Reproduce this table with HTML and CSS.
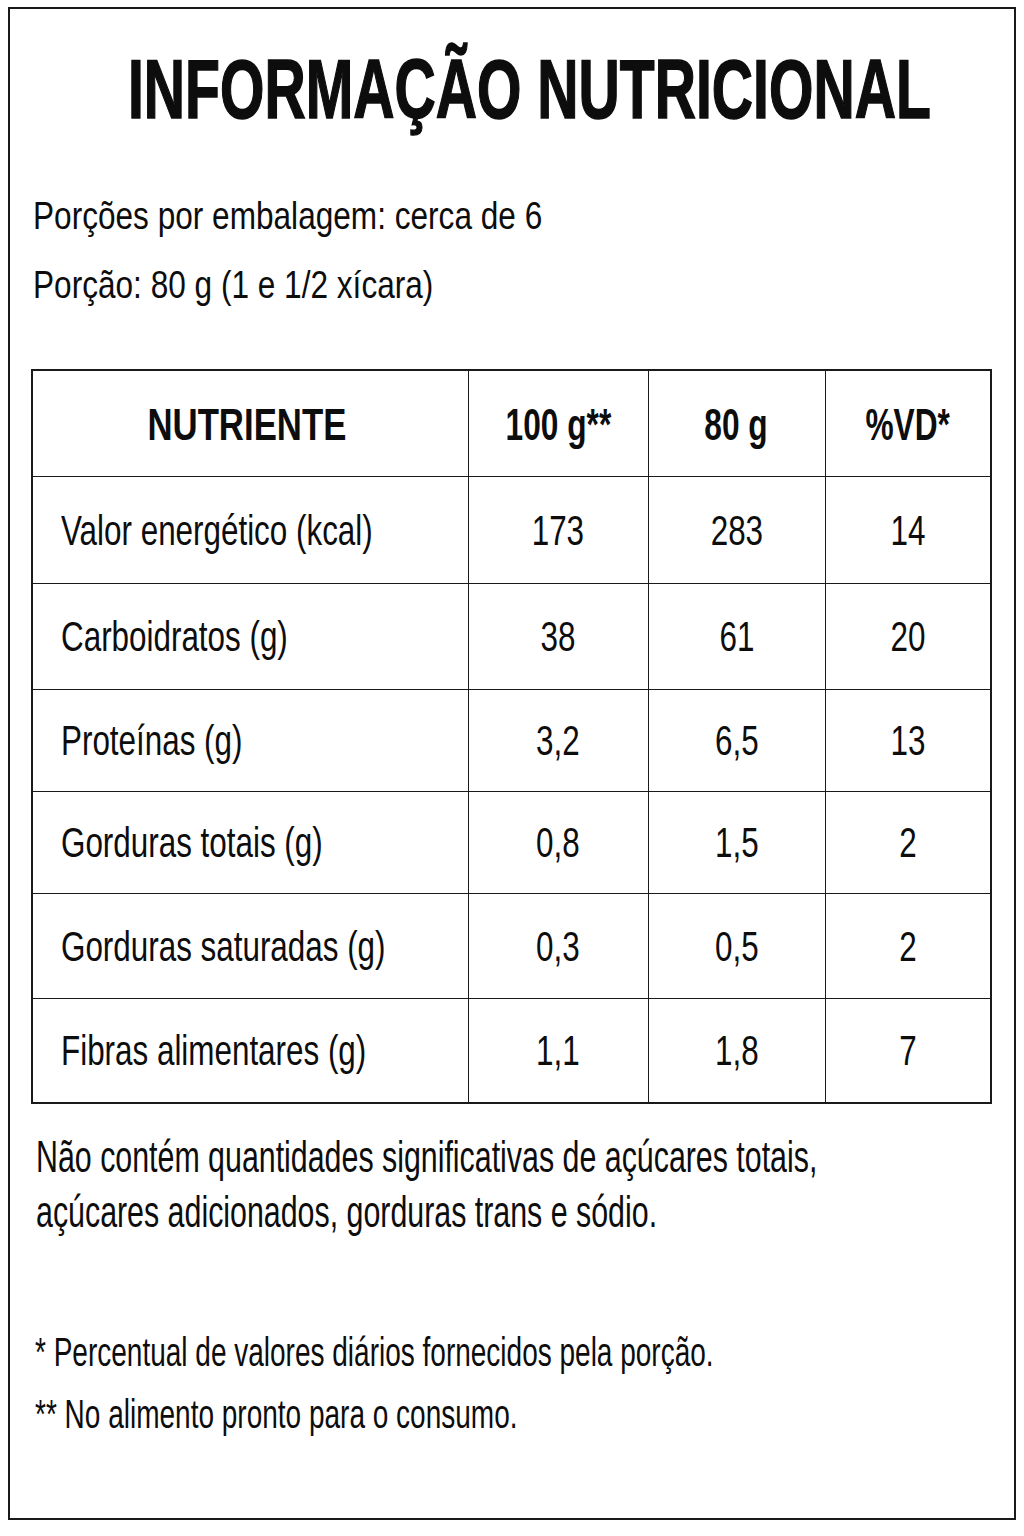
FILE: index.html
```html
<!DOCTYPE html>
<html lang="pt-BR">
<head>
<meta charset="utf-8">
<title>Informação Nutricional</title>
<link rel="stylesheet" href="styles.css">
</head>
<body>
<div class="label">
  <h1 class="title"><span class="sx">INFORMAÇÃO NUTRICIONAL</span></h1>
  <div class="serving">
    <p class="serving-line"><span class="sx">Porções por embalagem: cerca de 6</span></p>
    <p class="serving-line"><span class="sx">Porção: 80 g (1 e 1/2 xícara)</span></p>
  </div>
  <table class="facts">
    <colgroup>
      <col class="c-name"><col class="c-100"><col class="c-80"><col class="c-vd">
    </colgroup>
    <thead>
      <tr class="row-head">
        <th class="name-head"><span class="sx">NUTRIENTE</span></th>
        <th><span class="sx">100 g**</span></th>
        <th><span class="sx">80 g</span></th>
        <th><span class="sx">%VD*</span></th>
      </tr>
    </thead>
    <tbody>
      <tr class="r1"><td class="name"><span class="sx">Valor energético (kcal)</span></td><td><span class="sx">173</span></td><td><span class="sx">283</span></td><td><span class="sx">14</span></td></tr>
      <tr class="r2"><td class="name"><span class="sx">Carboidratos (g)</span></td><td><span class="sx">38</span></td><td><span class="sx">61</span></td><td><span class="sx">20</span></td></tr>
      <tr class="r3"><td class="name"><span class="sx">Proteínas (g)</span></td><td><span class="sx">3,2</span></td><td><span class="sx">6,5</span></td><td><span class="sx">13</span></td></tr>
      <tr class="r4"><td class="name"><span class="sx">Gorduras totais (g)</span></td><td><span class="sx">0,8</span></td><td><span class="sx">1,5</span></td><td><span class="sx">2</span></td></tr>
      <tr class="r5"><td class="name"><span class="sx">Gorduras saturadas (g)</span></td><td><span class="sx">0,3</span></td><td><span class="sx">0,5</span></td><td><span class="sx">2</span></td></tr>
      <tr class="r6"><td class="name"><span class="sx">Fibras alimentares (g)</span></td><td><span class="sx">1,1</span></td><td><span class="sx">1,8</span></td><td><span class="sx">7</span></td></tr>
    </tbody>
  </table>
  <div class="note">
    <p class="note-line"><span class="sx">Não contém quantidades significativas de açúcares totais,</span></p>
    <p class="note-line"><span class="sx">açúcares adicionados, gorduras trans e sódio.</span></p>
  </div>
  <div class="footnotes">
    <p class="foot"><span class="sx">* Percentual de valores diários fornecidos pela porção.</span></p>
    <p class="foot"><span class="sx">** No alimento pronto para o consumo.</span></p>
  </div>
</div>
</body>
</html>
```

FILE: styles.css
```css
html, body {
  margin: 0;
  padding: 0;
  background: #ffffff;
}
body {
  padding: 7px 8px 0 8px;
  font-family: "Liberation Sans", Arial, "Helvetica", sans-serif;
  color: #0d0d0d;
}
.label {
  box-sizing: border-box;
  width: 1008px;
  height: 1513px;
  border: 2px solid #1a1a1a;
  padding: 0 22px;
  overflow: hidden;
}
.sx {
  display: inline-block;
  white-space: nowrap;
  transform: scaleX(var(--sx, 0.72));
  transform-origin: left center;
}
.title {
  --sx: 0.68;
  margin: 0;
  padding: 32px 0 0 96px;
  font-size: 84px;
  line-height: 96px;
  font-weight: 700;
  white-space: nowrap;
  -webkit-text-stroke: 1.5px #0d0d0d;
}
.serving {
  --sx: 0.81;
  margin-top: 44px;
  padding-left: 1px;
}
.serving-line {
  margin: 0;
  font-size: 39px;
  line-height: 69px;
  white-space: nowrap;
}
.facts {
  margin: 50px 0 0 -1px;
  width: 959px;
  border-collapse: collapse;
  table-layout: fixed;
  border: 2px solid #1a1a1a;
}
.c-name { width: 436px; }
.c-100 { width: 180px; }
.c-80 { width: 177px; }
.c-vd { width: 166px; }
.facts th, .facts td {
  border: 1.5px solid #1a1a1a;
  text-align: center;
  vertical-align: middle;
  padding: 0;
  white-space: nowrap;
}
.facts th .sx, .facts td .sx {
  transform-origin: center center;
}
.facts th {
  --sx: 0.72;
  font-weight: 700;
  font-size: 44px;
  height: 103px;
  padding-top: 2px;
}
.facts th.name-head {
  --sx: 0.79;
  padding-right: 6px;
}
.facts td {
  --sx: 0.73;
  font-weight: 400;
  font-size: 43px;
}
.facts td.name {
  text-align: left;
  padding-left: 28px;
}
.facts td.name .sx {
  transform-origin: left center;
}
.r1 td { height: 106px; }
.r2 td { height: 105px; }
.r3 td { height: 101px; }
.r4 td { height: 101px; }
.r5 td { height: 104px; }
.r6 td { height: 103px; }
.note {
  --sx: 0.69;
  margin: 25px 0 0 4px;
}
.note-line {
  margin: 0;
  font-size: 44px;
  line-height: 55px;
  white-space: nowrap;
}
.footnotes {
  --sx: 0.70;
  margin-top: 82px;
  padding-left: 3px;
}
.foot {
  margin: 0;
  font-size: 40px;
  line-height: 62px;
  white-space: nowrap;
}
```
